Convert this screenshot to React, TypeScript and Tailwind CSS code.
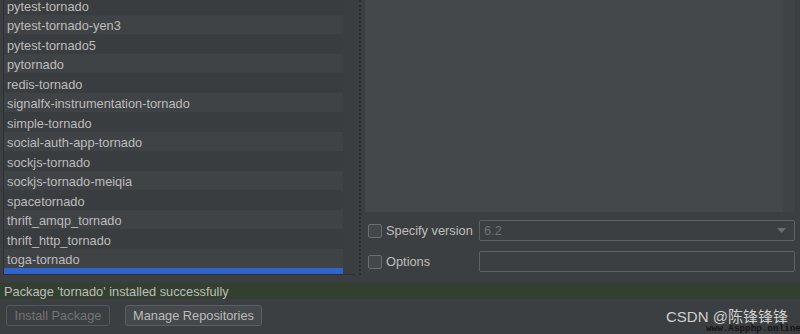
import React from 'react';

const packages = [
  'pytest-tornado',
  'pytest-tornado-yen3',
  'pytest-tornado5',
  'pytornado',
  'redis-tornado',
  'signalfx-instrumentation-tornado',
  'simple-tornado',
  'social-auth-app-tornado',
  'sockjs-tornado',
  'sockjs-tornado-meiqia',
  'spacetornado',
  'thrift_amqp_tornado',
  'thrift_http_tornado',
  'toga-tornado',
];

const Checkbox: React.FC = () => (
  <div className="w-[14px] h-[14px] rounded-[2px] border border-[#6b6e70] bg-[#43474a] shrink-0" />
);

const PackageList: React.FC = () => (
  <div className="w-[352px] h-[275px] ml-[3px] border-l border-b border-[#2e3032] flex overflow-hidden">
    <div className="w-[339px] flex flex-col mt-[-4.7px]">
      {packages.map((name, i) => (
        <div
          key={name}
          className={`h-[19.5px] shrink-0 flex items-center pl-[3px] pt-[3px] text-[12.8px] text-[#bcbcbc] ${
            i % 2 === 0 ? 'bg-[#3a3d3f]' : 'bg-[#404345]'
          }`}
        >
          {name}
        </div>
      ))}
      <div className="h-[19.5px] shrink-0 bg-[#2f65ca]" />
    </div>
    <div className="flex-1 bg-[#3b3e40]" />
  </div>
);

const Splitter: React.FC = () => (
  <div className="w-[10px] flex justify-center">
    <div className="w-0 h-[275px] border-l-2 border-dotted border-[#2a2c2e]" />
  </div>
);

const DetailsPanel: React.FC = () => (
  <div className="flex-1 flex flex-col pr-[5px]">
    <div className="h-[212px] flex">
      <div className="flex-1 bg-[#45484a]" />
      <div className="w-[12px] bg-[#404345]" />
    </div>
    <div className="mt-[8px] flex items-center h-[21px]">
      <div className="w-[114px] flex items-center pl-[3px] gap-[4px]">
        <Checkbox />
        <span className="text-[12.8px] text-[#bdbdbd]">Specify version</span>
      </div>
      <div className="flex-1 h-[21px] border border-[#5f6264] rounded-[2px] bg-[#3c3f41] flex items-center justify-between pl-[4px] pr-[8px]">
        <span className="text-[12.8px] text-[#707274]">6.2</span>
        <svg width="9" height="5" viewBox="0 0 9 5">
          <path d="M0 0 L9 0 L4.5 5 Z" fill="#6b6e70" />
        </svg>
      </div>
    </div>
    <div className="mt-[10px] flex items-center h-[21px]">
      <div className="w-[114px] flex items-center pl-[3px] gap-[4px]">
        <Checkbox />
        <span className="text-[12.8px] text-[#bdbdbd]">Options</span>
      </div>
      <div className="flex-1 h-[21px] border border-[#5f6264] rounded-[2px] bg-[#3c3f41]" />
    </div>
  </div>
);

export default function App() {
  return (
    <div
      className="relative w-[800px] h-[334px] bg-[#3c3f41] overflow-hidden flex flex-col"
      style={{ fontFamily: '"Liberation Sans", Arial, sans-serif' }}
    >
      <div className="h-[283px] flex">
        <PackageList />
        <Splitter />
        <DetailsPanel />
      </div>

      <div className="h-[16px] bg-[#34402f] flex items-center pl-[4px] pt-[1px] text-[12.8px] text-[#bcbcbc]">
        Package 'tornado' installed successfully
      </div>

      <div className="mt-[6px] flex items-center gap-[15px] pl-[6px]">
        <div className="w-[104px] h-[21px] border border-[#55585a] rounded-[3px] flex items-center justify-center text-[12.8px] text-[#727476]">
          Install Package
        </div>
        <div className="w-[137px] h-[21px] border border-[#5c5f61] rounded-[3px] bg-[#45494b] flex items-center justify-center text-[12.8px] text-[#bcbcbc]">
          Manage Repositories
        </div>
      </div>

      <div
        className="absolute left-[666px] top-[309px] text-[15px] text-[#cfcfcf] leading-none"
        style={{ fontFamily: '"Liberation Sans", "Noto Sans CJK SC", sans-serif' }}
      >
        CSDN @陈锋锋锋
      </div>
      <div
        className="absolute left-[706px] top-[324px] text-[9.3px] text-[#141414] leading-none font-bold"
        style={{ fontFamily: '"Liberation Mono", monospace' }}
      >
        www.Aspphp.online
      </div>
    </div>
  );
}
